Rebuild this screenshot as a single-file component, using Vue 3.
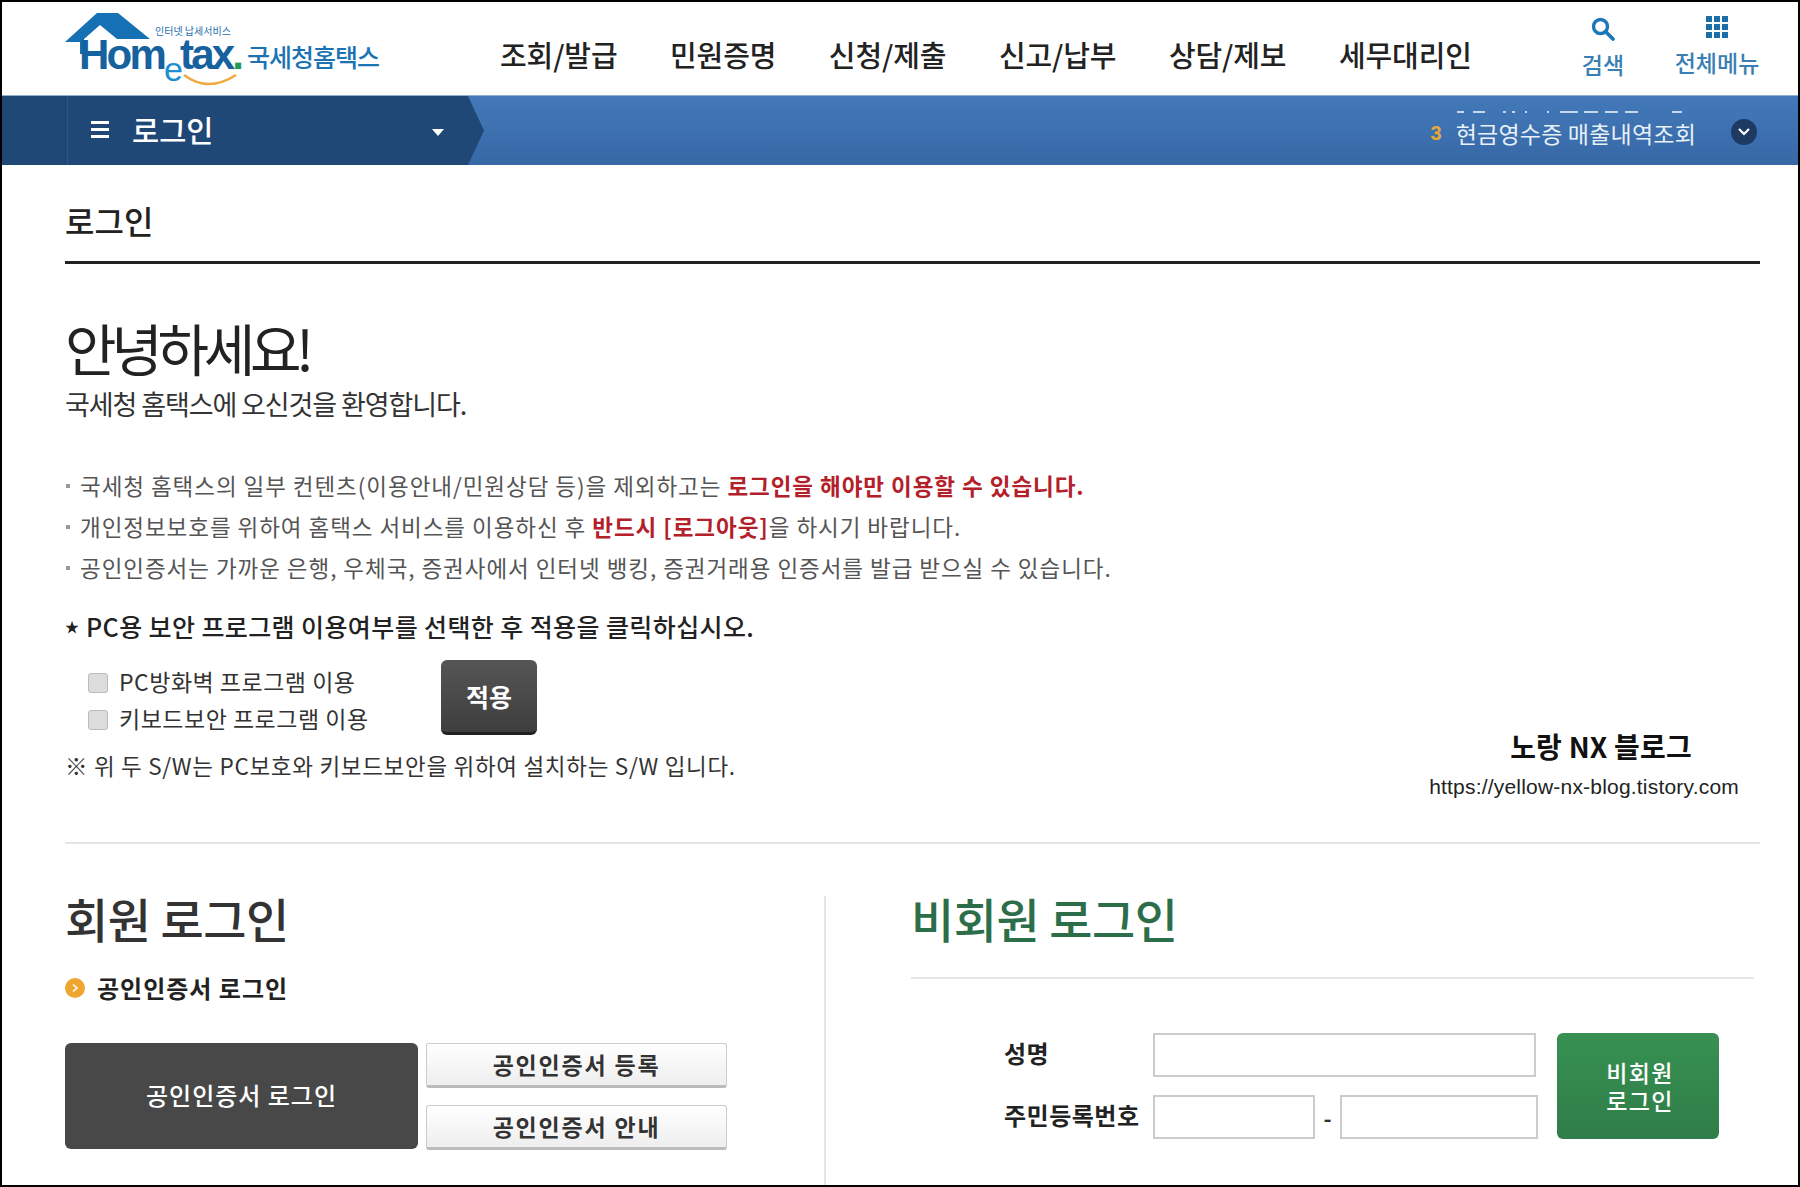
<script setup>
const navItems = ['조회/발급', '민원증명', '신청/제출', '신고/납부', '상담/제보', '세무대리인']
const bullets = [
  { text: '국세청 홈택스의 일부 컨텐츠(이용안내/민원상담 등)을 제외하고는 ', red: '로그인을 해야만 이용할 수 있습니다.', tail: '' },
  { text: '개인정보보호를 위하여 홈택스 서비스를 이용하신 후 ', red: '반드시 [로그아웃]', tail: '을 하시기 바랍니다.' },
  { text: '공인인증서는 가까운 은행, 우체국, 증권사에서 인터넷 뱅킹, 증권거래용 인증서를 발급 받으실 수 있습니다.', red: '', tail: '' }
]
const dots = Array.from({ length: 9 })
</script>

<template>
  <div class="frame">
    <header class="top">
      <div class="logo">
        <svg class="roof" width="92" height="48" viewBox="0 0 92 48">
          <path d="M2 30 L34 1 L55 1 L87 27 L54 27 L37 13 L21 27 L21 42 L17 42 L17 30 Z" fill="#1670b4" />
        </svg>
        <span class="service">인터넷 납세서비스</span>
        <span class="wordmark">Hom<span class="e">e</span>tax<span class="dot">.</span></span>
        <svg class="smile" width="56" height="14" viewBox="0 0 56 14">
          <path d="M2 2 Q26 20 54 2" fill="none" stroke="#eea93f" stroke-width="2.4" />
        </svg>
        <span class="logo-ko">국세청홈택스</span>
      </div>
      <nav class="nav">
        <a v-for="item in navItems" :key="item">{{ item }}</a>
      </nav>
      <div class="tools">
        <div class="tool tool-search">
          <svg width="26" height="26" viewBox="0 0 26 26">
            <circle cx="10.5" cy="10.5" r="7" fill="none" stroke="#1c76b8" stroke-width="3.4" />
            <path d="M15.5 15.5 L23 23" stroke="#1c76b8" stroke-width="3.8" stroke-linecap="round" />
          </svg>
          <span>검색</span>
        </div>
        <div class="tool tool-all">
          <div class="grid-icon"><i v-for="(d, i) in dots" :key="i"></i></div>
          <span>전체메뉴</span>
        </div>
      </div>
    </header>

    <div class="bar">
      <div class="crumb">
        <div class="burger"><i></i><i></i><i></i></div>
        <span class="crumb-title">로그인</span>
        <span class="caret"></span>
      </div>
      <div class="ticker">
        <svg class="ticker-prev" width="226" height="3" viewBox="0 0 226 3">
          <path d="M0 1H7M16 1H28M46 1H49M55 1H58M68 1H70M90 1H92M103 1H121M127 1H141M148 1H161M168 1H181M215 1H225" stroke="#e8f0f8" stroke-width="2" fill="none" />
        </svg>
        <span class="rank">3</span>
        <span class="ticker-text">현금영수증 매출내역조회</span>
        <span class="round">
          <svg width="14" height="10" viewBox="0 0 14 10"><path d="M2 2 L7 7 L12 2" fill="none" stroke="#fff" stroke-width="2.2" /></svg>
        </span>
      </div>
    </div>

    <main class="page">
      <h2 class="page-title">로그인</h2>

      <section class="hello">
        <h1>안녕하세요!</h1>
        <p class="welcome">국세청 홈택스에 오신것을 환영합니다.</p>
      </section>

      <ul class="bullets">
        <li v-for="b in bullets" :key="b.text">{{ b.text }}<strong>{{ b.red }}</strong>{{ b.tail }}</li>
      </ul>

      <p class="star"><span class="star-mark">★</span>PC용 보안 프로그램 이용여부를 선택한 후 적용을 클릭하십시오.</p>

      <div class="opts">
        <div class="checks">
          <label><span class="box"></span>PC방화벽 프로그램 이용</label>
          <label><span class="box"></span>키보드보안 프로그램 이용</label>
        </div>
        <button class="apply">적용</button>
      </div>

      <div class="note-row">
        <p class="note">※ 위 두 S/W는 PC보호와 키보드보안을 위하여 설치하는 S/W 입니다.</p>
        <div class="blog">
          <b>노랑 NX 블로그</b>
          <span>https://yellow-nx-blog.tistory.com</span>
        </div>
      </div>

      <div class="logins">
        <section class="member">
          <h2>회원 로그인</h2>
          <h3><span class="orb">
            <svg width="10" height="10" viewBox="0 0 10 10"><path d="M3 1.5 L7 5 L3 8.5" fill="none" stroke="#fff" stroke-width="1.6" /></svg>
          </span>공인인증서 로그인</h3>
          <div class="cert">
            <button class="cert-main">공인인증서 로그인</button>
            <div class="cert-side">
              <button>공인인증서 등록</button>
              <button>공인인증서 안내</button>
            </div>
          </div>
        </section>
        <div class="vline"></div>
        <section class="guest">
          <h2>비회원 로그인</h2>
          <div class="guest-form">
            <div class="fields">
              <div class="field"><label>성명</label><span class="inp wide"></span></div>
              <div class="field"><label>주민등록번호</label><span class="inp half"></span><span class="dash">-</span><span class="inp half2"></span></div>
            </div>
            <button class="guest-btn">비회원<br />로그인</button>
          </div>
        </section>
      </div>
    </main>
  </div>
</template>

<style>
html, body { margin: 0; background: #fff; }
</style>

<style scoped>
.frame {
  width: 1800px; height: 1187px; box-sizing: border-box; border: 2px solid #000; overflow: hidden;
  background: #fff; color: #222;
  font-family: "Noto Sans CJK KR", "Liberation Sans", sans-serif;
}
.top { height: 93px; display: flex; align-items: flex-start; }
.logo { width: 498px; height: 93px; position: relative; flex: none; }
.roof { position: absolute; left: 61px; top: 10px; }
.service { position: absolute; left: 153px; top: 23px; font-size: 10px; line-height: 12px; color: #1f6fae; }
.wordmark {
  position: absolute; left: 77px; top: 25px; font: 700 42px/56px "Liberation Sans", sans-serif;
  letter-spacing: -2.8px; color: #15629f; white-space: nowrap;
}
.wordmark .e { position: relative; top: 12px; font-weight: 400; color: #1e8fd0; font-size: 34px; }
.wordmark .dot { color: #1f9b58; }
.smile { position: absolute; left: 180px; top: 71px; }
.logo-ko { position: absolute; left: 245px; top: 37px; font-size: 25px; line-height: 34px; letter-spacing: -1px; color: #1c73b4; font-weight: 500; }
.nav { display: flex; gap: 52.5px; padding-top: 32px; }
.nav a { font-size: 29px; line-height: 40px; font-weight: 500; letter-spacing: -0.1px; color: #222; }
.tools { margin-left: auto; padding-top: 14px; display: flex; }
.tool { display: flex; flex-direction: column; align-items: center; color: #3a7fb3; font-size: 23px; font-weight: 500; line-height: 30px; }
.tool svg { display: block; height: 26px; margin-bottom: 7px; }
.tool-search { width: 60px; margin-right: 38px; }
.tool-all { width: 92px; margin-right: 35px; }
.grid-icon { display: grid; grid-template-columns: repeat(3, 6px); gap: 2px; margin-bottom: 9px; }
.grid-icon i { width: 6px; height: 6px; background: #1c6ea8; display: block; }

.bar {
  height: 70px; display: flex; justify-content: space-between; align-items: stretch;
  background: linear-gradient(#4379b9, #3768a6);
  border-top: 1px solid #8fb0cd; box-sizing: border-box;
}
.crumb {
  width: 482px; position: relative; display: flex; align-items: center; padding: 0 0 3px 89px; box-sizing: border-box;
  background: #1f4877; clip-path: polygon(0 0, 466px 0, 482px 50%, 466px 100%, 0 100%);
}
.crumb::before { content: ""; position: absolute; left: 65px; top: 0; bottom: 0; width: 1px; background: #2d5688; }
.burger { display: flex; flex-direction: column; gap: 4px; margin-right: 23px; }
.burger i { display: block; width: 18px; height: 3px; background: #fff; }
.crumb-title { color: #fff; font-size: 29.5px; line-height: 40px; font-weight: 500; }
.caret { position: absolute; left: 430px; top: 33px; border: 6.5px solid transparent; border-top: 7px solid #fff; border-bottom: 0; }
.ticker { position: relative; display: flex; align-items: center; padding: 4px 41px 0 0; color: #e8f0f8; }
.ticker-prev { position: absolute; left: 26px; top: 15px; opacity: 0.8; }
.rank { color: #e3a83a; font: 700 20px/28px "Liberation Sans", sans-serif; margin-right: 14px; }
.ticker-text { font-size: 23px; line-height: 30px; letter-spacing: 0.2px; margin-right: 35px; }
.round { width: 26px; height: 26px; border-radius: 50%; background: #1d3a63; display: flex; align-items: center; justify-content: center; margin-top: -2px; }

.page { padding: 0 38px 0 63px; }
.page-title { margin: 0; height: 99px; box-sizing: border-box; padding-top: 35px; border-bottom: 3px solid #222; font-size: 32px; line-height: 40px; font-weight: 500; color: #222; }
.hello { padding-top: 48px; }
.hello h1 { margin: 0; font-size: 56px; line-height: 70px; font-weight: 400; letter-spacing: -5.3px; color: #222; }
.welcome { margin: 3px 0 0; font-size: 27px; line-height: 38px; letter-spacing: -1.1px; color: #333; }
.bullets { list-style: none; margin: 42px 0 0; padding: 0; font-size: 22.5px; line-height: 41px; letter-spacing: 0.95px; color: #555; }
.bullets li { position: relative; padding-left: 15px; }
.bullets li::before { content: ""; position: absolute; left: 1px; top: 19px; width: 4px; height: 4px; background: #999; }
.bullets strong { color: #b3202a; font-weight: 700; }
.star { margin: 21px 0 0; font-size: 25px; line-height: 34px; font-weight: 500; letter-spacing: 0.4px; color: #222; display: flex; align-items: center; }
.star-mark { font-size: 14px; width: 21px; flex: none; letter-spacing: 0; }
.opts { display: flex; margin-top: 17px; }
.checks { width: 376px; padding: 6px 0 0 23px; box-sizing: border-box; display: flex; flex-direction: column; gap: 7px; }
.checks label { display: flex; align-items: center; font-size: 23px; line-height: 30px; letter-spacing: 0.5px; color: #333; }
.box { width: 20px; height: 20px; margin-right: 11px; border: 1px solid #bbb; border-radius: 3px; background: #ddd; box-sizing: border-box; flex: none; position: relative; top: 2px; }
.apply { width: 96px; height: 75px; border: 0; border-radius: 6px; color: #fff; font: 700 25px/30px "Noto Sans CJK KR", sans-serif; background: linear-gradient(#555, #3e3e3e); border-bottom: 3px solid #222; padding: 0; }
.note-row { display: flex; justify-content: space-between; height: 107px; border-bottom: 2px solid #e4e4e4; }
.note { margin: 15px 0 0; font-size: 22.5px; line-height: 30px; letter-spacing: 0.7px; color: #333; }
.blog { display: flex; flex-direction: column; margin-top: -7px; padding-right: 21px; align-items: flex-end; }
.blog b { font-size: 28px; line-height: 36px; color: #111; font-weight: 700; margin-right: 47px; letter-spacing: 0.2px; }
.blog span { font: 21px/30px "Liberation Sans", sans-serif; letter-spacing: 0.2px; color: #222; margin-top: 8px; }

.logins { display: flex; }
.member { width: 759px; padding-top: 44px; box-sizing: border-box; flex: none; }
.vline { width: 2px; margin: 52px 85px 0 0; height: 300px; background: #e6e6e6; flex: none; }
.member h2, .guest h2 { margin: 0; font-size: 47px; line-height: 60px; font-weight: 500; letter-spacing: -0.5px; color: #333; }
.member h3 { margin: 24px 0 0; display: flex; align-items: center; font-size: 24px; line-height: 32px; font-weight: 700; letter-spacing: 1px; color: #222; }
.orb { width: 20px; height: 20px; border-radius: 50%; background: #eea62e; margin-right: 12px; display: flex; align-items: center; justify-content: center; }
.cert { display: flex; gap: 7px; margin-top: 39px; }
.cert-main { width: 353px; height: 106px; border: 0; border-radius: 6px; background: #484848; color: #fff; font: 500 24px/30px "Noto Sans CJK KR", sans-serif; letter-spacing: 1px; padding: 0 0 2px; }
.cert-side { display: flex; flex-direction: column; gap: 17px; margin-left: 1px; }
.cert-side button { width: 301px; height: 45px; box-sizing: border-box; border: 1px solid #ccc; border-bottom: 3px solid #bbb; border-radius: 3px; background: linear-gradient(#fff, #eee); color: #333; font: 700 23px/30px "Noto Sans CJK KR", sans-serif; letter-spacing: 1.8px; padding: 0 0 2px; }
.guest { flex: 1; padding-top: 44px; padding-right: 6px; }
.guest h2 { color: #2c6e4a; padding-bottom: 29px; border-bottom: 2px solid #e6e6e6; }
.guest-form { display: flex; padding: 54px 0 0 92px; }
.fields { display: flex; flex-direction: column; gap: 18px; width: 556px; flex: none; }
.field { display: flex; align-items: center; height: 44px; }
.field label { width: 150px; padding: 0 0 5px 1px; box-sizing: border-box; font-size: 24px; line-height: 30px; font-weight: 700; letter-spacing: 0.5px; color: #222; flex: none; white-space: nowrap; }
.inp { display: block; height: 44px; box-sizing: border-box; border: 2px solid #ccc; background: #fff; }
.wide { width: 383px; }
.half { width: 162px; }
.half2 { width: 198px; }
.dash { width: 25px; text-align: center; font-size: 22px; font-weight: 700; color: #333; }
.guest-btn { width: 162px; height: 106px; margin-left: -2px; border: 0; border-radius: 6px; background: linear-gradient(#379152, #2f7d48); color: #fff; font: 500 23px/28px "Noto Sans CJK KR", sans-serif; letter-spacing: 1.3px; padding: 0 0 0 4px; flex: none; }
</style>
